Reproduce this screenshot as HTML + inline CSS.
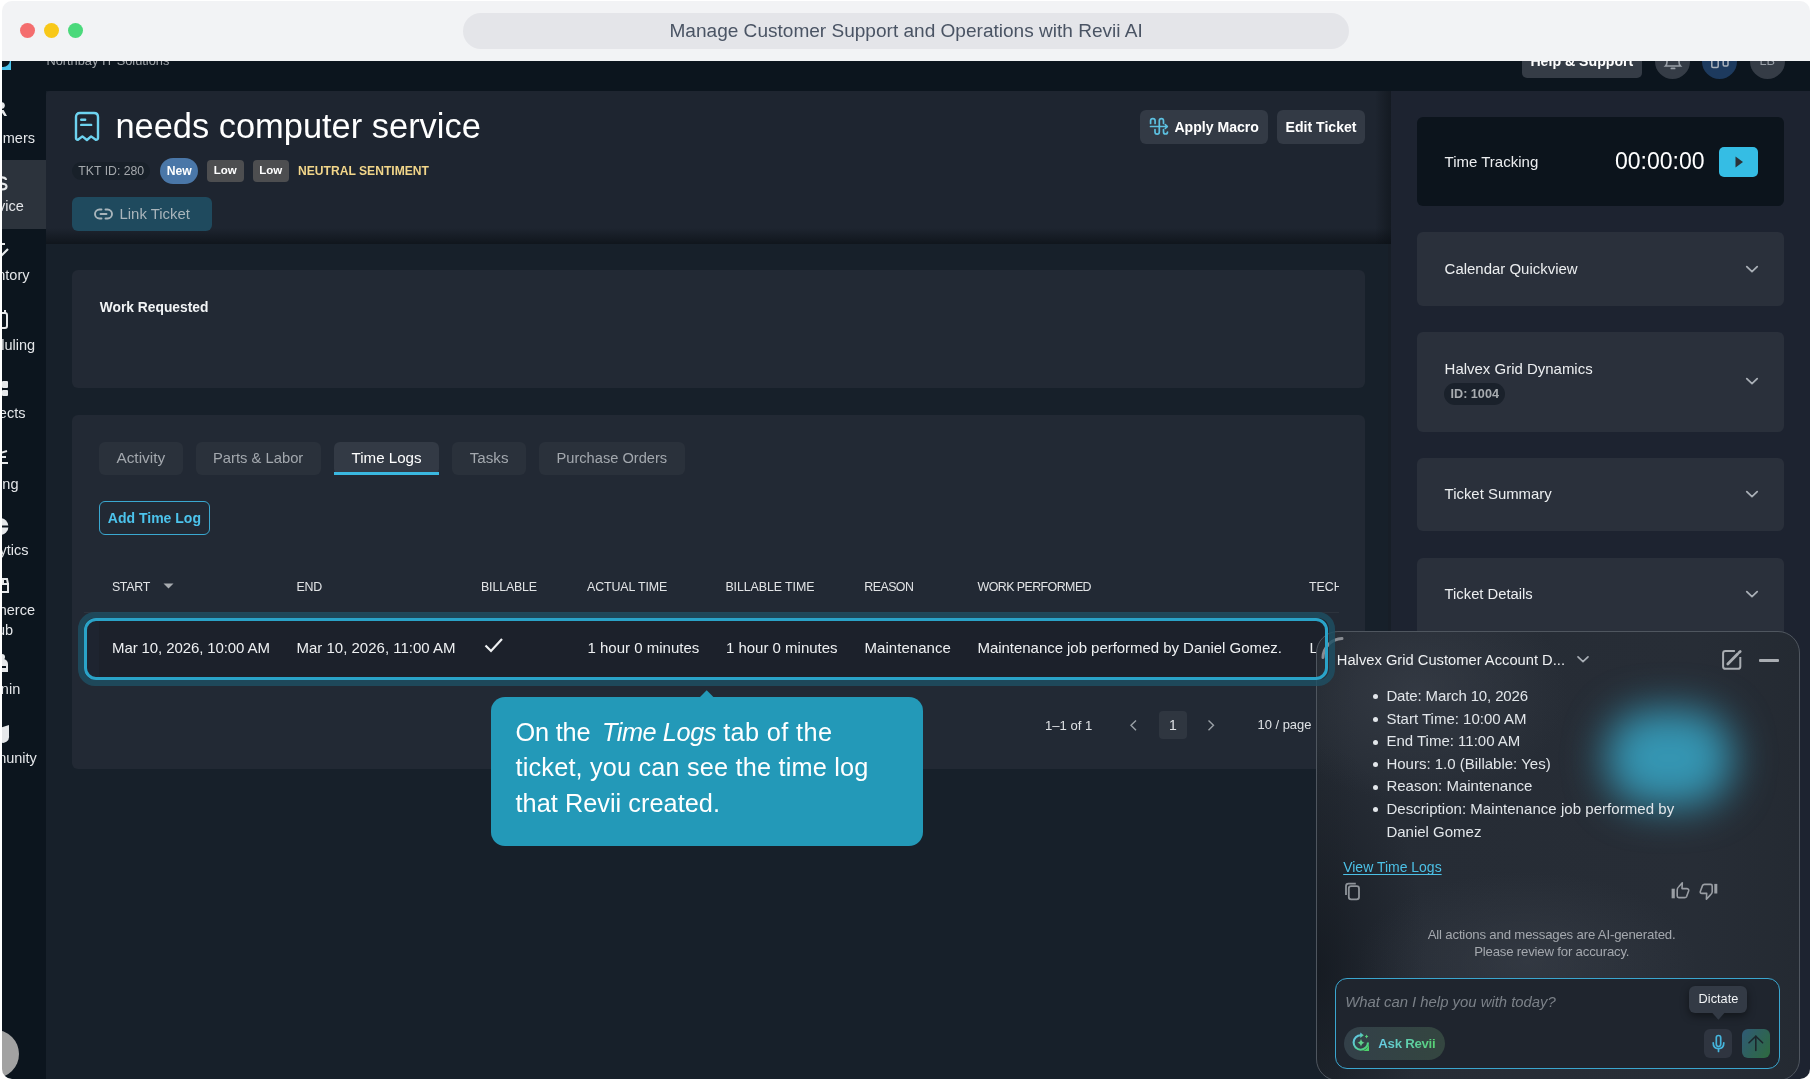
<!DOCTYPE html>
<html><head><meta charset="utf-8">
<style>
*{box-sizing:border-box;margin:0;padding:0}
html,body{width:1812px;height:1080px;overflow:hidden;background:#ffffff;font-family:"Liberation Sans",sans-serif}
#win{position:absolute;left:0;top:0;width:1812px;height:1080px;will-change:transform;clip-path:inset(1px 2px 1px 2px round 10px);background:#1a212b;overflow:hidden}
.t{position:absolute;white-space:nowrap}
.b{position:absolute}
</style></head><body>
<div id="win">
<div class="b" style="left:0px;top:91px;width:1391px;height:989px;background:#17202a;border-radius:0px;"></div>
<div class="b" style="left:1387.5px;top:243px;width:4.0px;height:837px;background:#171e27;border-radius:0px;"></div>
<div class="b" style="left:1391px;top:91px;width:421px;height:989px;background:#1d2330;border-radius:0px;"></div>
<div class="b" style="left:46px;top:91px;width:1345px;height:153px;background:#1e2530;border-radius:0px;border-top-left-radius:4px"></div>
<div class="b" style="left:46px;top:228px;width:1345px;height:16px;background:linear-gradient(rgba(10,15,20,0),rgba(10,15,20,0.7));border-radius:0px;"></div>
<div class="b" style="left:1375px;top:91px;width:16px;height:153px;background:linear-gradient(90deg,rgba(10,15,20,0),rgba(10,15,20,0.5));border-radius:0px;"></div>
<div class="b" style="left:0px;top:61px;width:1812px;height:30px;background:#0c151e;border-radius:0px;"></div>
<div class="b" style="left:0px;top:61px;width:46px;height:1019px;background:#0c151e;border-radius:0px;"></div>
<div class="b" style="left:2px;top:58px;width:8.5px;height:11.5px;background:#4cc3ec;border-radius:0px;"></div>
<div class="b" style="left:-6px;top:52.5px;width:15.5px;height:14.5px;background:#0c151e;border-radius:8px;"></div>
<div class="t" style="left:46.40px;top:54.95px;font-size:12.82px;line-height:12.82px;color:#a2a6ab;">Northbay IT Solutions</div>
<div class="b" style="left:1522px;top:44px;width:120px;height:34px;background:#353c46;border-radius:5px;"></div>
<div class="t" style="left:1530.40px;top:54.12px;font-size:14.15px;line-height:14.15px;color:#ffffff;font-weight:bold;">Help &amp; Support</div>
<div class="b" style="left:1655px;top:44px;width:35px;height:35px;background:#353c46;border-radius:18px;"></div>
<div class="b" style="left:1702px;top:44px;width:35px;height:35px;background:#1d3a5e;border-radius:18px;"></div>
<div class="b" style="left:1750px;top:44px;width:35px;height:35px;background:#353c46;border-radius:18px;"></div>
<svg class="b" style="left:1660px;top:50px;" width="26" height="22" viewBox="0 0 26 22"><path d="M7 2 V12 Q7 14.5 5.5 16 H20.5 Q19 14.5 19 12 V2" fill="none" stroke="#9aa0a8" stroke-width="1.6"/><rect x="10.5" y="17.5" width="5" height="1.8" rx="0.9" fill="#9aa0a8"/></svg>
<svg class="b" style="left:1706px;top:50px;" width="28" height="22" viewBox="0 0 28 22"><rect x="5.8" y="2" width="6.4" height="15.5" rx="1.2" fill="none" stroke="#aab2bc" stroke-width="1.5"/><rect x="17.2" y="6" width="4.8" height="10" rx="1.2" fill="none" stroke="#aab2bc" stroke-width="1.5"/></svg>
<div class="t" style="left:1759.40px;top:54.80px;font-size:12.75px;line-height:12.75px;color:#9aa0a8;">LB</div>
<div class="b" style="left:2px;top:160px;width:44px;height:69px;background:#2c333c;border-radius:0px;"></div>
<div class="t" style="left:2.78px;top:131.13px;font-size:14.50px;line-height:14.50px;color:#e4e6e9;">mers</div>
<div class="t" style="left:-2.09px;top:199.43px;font-size:14.50px;line-height:14.50px;color:#e4e6e9;">vice</div>
<div class="t" style="left:-2.74px;top:267.93px;font-size:14.50px;line-height:14.50px;color:#e4e6e9;">ntory</div>
<div class="t" style="left:1.34px;top:337.73px;font-size:14.50px;line-height:14.50px;color:#e4e6e9;">luling</div>
<div class="t" style="left:-1.19px;top:406.23px;font-size:14.50px;line-height:14.50px;color:#e4e6e9;">ects</div>
<div class="t" style="left:2.37px;top:476.63px;font-size:14.50px;line-height:14.50px;color:#e4e6e9;">ng</div>
<div class="t" style="left:-0.50px;top:543.43px;font-size:14.50px;line-height:14.50px;color:#e4e6e9;">ytics</div>
<div class="t" style="left:-1.27px;top:603.13px;font-size:14.50px;line-height:14.50px;color:#e4e6e9;">herce</div>
<div class="t" style="left:-3.13px;top:622.53px;font-size:14.50px;line-height:14.50px;color:#e4e6e9;">ub</div>
<div class="t" style="left:0.85px;top:682.23px;font-size:14.50px;line-height:14.50px;color:#e4e6e9;">nin</div>
<div class="t" style="left:-1.89px;top:750.73px;font-size:14.50px;line-height:14.50px;color:#e4e6e9;">nunity</div>
<svg class="b" style="left:0px;top:100px;" width="10" height="18" viewBox="0 0 10 18"><circle cx="1.5" cy="5.5" r="3.3" fill="#e6e8ea"/><path d="M0 10 H3.6 L7 16 H4.4 L1.5 12 H0 Z" fill="#e6e8ea"/></svg>
<svg class="b" style="left:0px;top:172px;" width="10" height="20" viewBox="0 0 10 20"><path d="M0 5.5 Q6 5 6 8 M0 11.5 Q6.5 11.5 6.5 14.5 Q6.5 17.5 1 17.5" fill="none" stroke="#e6e8ea" stroke-width="2.2"/></svg>
<svg class="b" style="left:0px;top:240px;" width="10" height="20" viewBox="0 0 10 20"><path d="M0 4 H5 M0 17 L8 9" stroke="#e6e8ea" stroke-width="2.2" fill="none"/></svg>
<svg class="b" style="left:0px;top:310px;" width="10" height="20" viewBox="0 0 10 20"><rect x="-4" y="3" width="11" height="15" rx="2" fill="none" stroke="#e6e8ea" stroke-width="2"/><rect x="4" y="0" width="2" height="4" fill="#e6e8ea"/></svg>
<div class="b" style="left:2px;top:381px;width:6px;height:7px;background:#e6e8ea;border-radius:1px;"></div>
<div class="b" style="left:2px;top:390px;width:6px;height:6px;background:#e6e8ea;border-radius:1px;"></div>
<svg class="b" style="left:0px;top:449px;" width="10" height="16" viewBox="0 0 10 16"><path d="M0 4 L7 2 M2 8 L6 8 M0 14 L8 14" stroke="#e6e8ea" stroke-width="2" fill="none"/></svg>
<svg class="b" style="left:0px;top:517px;" width="10" height="19" viewBox="0 0 10 19"><path d="M0 1 A8 8 0 0 1 0 18 Z" fill="#e6e8ea"/><rect x="0" y="8.5" width="9" height="2" fill="#0c151e"/></svg>
<svg class="b" style="left:0px;top:576px;" width="10" height="18" viewBox="0 0 10 18"><path d="M1 8 L8 8 L8 16 L1 16 Z M3 8 L3 3 L7 3 L8 8" stroke="#e6e8ea" stroke-width="2" fill="none"/></svg>
<svg class="b" style="left:0px;top:652px;" width="10" height="22" viewBox="0 0 10 22"><circle cx="2" cy="5" r="3" fill="#e6e8ea"/><path d="M-2 12 A5 5 0 0 1 8 12 L8 20 L-2 20 Z" fill="#e6e8ea"/><rect x="0" y="14" width="6" height="2" fill="#0c151e"/></svg>
<svg class="b" style="left:0px;top:724px;" width="10" height="20" viewBox="0 0 10 20"><path d="M0 4 L9 1 L9 12 A6 6 0 0 1 0 18 Z" fill="#e6e8ea"/></svg>
<div class="b" style="left:-30px;top:1030px;width:49px;height:48px;background:#a2a2a2;border-radius:26px;"></div>
<div class="b" style="left:0px;top:0px;width:1812px;height:61px;background:#f2f3f5;border-radius:0px;"></div>
<div class="b" style="left:20px;top:23px;width:15px;height:15px;background:#f46d6e;border-radius:8px;"></div>
<div class="b" style="left:44px;top:23px;width:15px;height:15px;background:#f8c819;border-radius:8px;"></div>
<div class="b" style="left:68px;top:23px;width:15px;height:15px;background:#4bd97b;border-radius:8px;"></div>
<div class="b" style="left:463px;top:13px;width:886px;height:36px;background:#e4e5e9;border-radius:18px;"></div>
<div class="t" style="left:669.50px;top:21.07px;font-size:19.06px;line-height:19.06px;color:#4a5464;">Manage Customer Support and Operations with Revii AI</div>
<svg class="b" style="left:74px;top:111px;" width="26" height="31" viewBox="0 0 26 31"><g fill="none" stroke="#6dd3f0" stroke-width="2.4" stroke-linejoin="round" stroke-linecap="round"><path d="M2 27 V6 Q2 2 6 2 H20 Q24 2 24 6 V27 Q24 28.6 21.8 28.8 L17.1 25.4 L12.9 29 L8.4 25.4 L3.9 28.8 Q2 28.6 2 27 Z"/><path d="M7.2 8.8 H11.2 M7.2 13.9 H17.2"/></g></svg>
<div class="t" style="left:115.40px;top:109.25px;font-size:34.44px;line-height:34.44px;color:#ffffff;">needs computer service</div>
<div class="b" style="left:72px;top:162px;width:78px;height:18px;background:#182029;border-radius:9px;"></div>
<div class="t" style="left:78.30px;top:165.00px;font-size:12.28px;line-height:12.28px;color:#a4a8ac;">TKT ID: 280</div>
<div class="b" style="left:160px;top:158px;width:38px;height:26px;background:#4a77a8;border-radius:13px;"></div>
<div class="t" style="left:166.70px;top:164.91px;font-size:12.16px;line-height:12.16px;color:#ffffff;font-weight:bold;">New</div>
<div class="b" style="left:207px;top:160px;width:37px;height:22px;background:#4d4e50;border-radius:4px;"></div>
<div class="t" style="left:213.80px;top:165.46px;font-size:11.50px;line-height:11.50px;color:#ffffff;font-weight:bold;">Low</div>
<div class="b" style="left:253px;top:160px;width:36px;height:22px;background:#4d4e50;border-radius:4px;"></div>
<div class="t" style="left:259.30px;top:165.46px;font-size:11.50px;line-height:11.50px;color:#ffffff;font-weight:bold;">Low</div>
<div class="t" style="left:298.00px;top:165.05px;font-size:12.11px;line-height:12.11px;color:#f2d68a;font-weight:bold;">NEUTRAL SENTIMENT</div>
<div class="b" style="left:72px;top:197px;width:140px;height:34px;background:#1f4a5e;border-radius:6px;"></div>
<svg class="b" style="left:94px;top:208px;" width="20" height="12" viewBox="0 0 20 12"><g fill="none" stroke="#a9b5bb" stroke-width="1.9" stroke-linecap="round"><path d="M7.5 1.5 H5.5 A4.5 4.5 0 0 0 5.5 10.5 H7.5"/><path d="M11.5 1.5 H13.5 A4.5 4.5 0 0 1 13.5 10.5 H11.5"/><path d="M6.5 6 H12.5"/></g></svg>
<div class="t" style="left:119.50px;top:206.57px;font-size:14.92px;line-height:14.92px;color:#a9b5bb;">Link Ticket</div>
<div class="b" style="left:1140px;top:110px;width:128px;height:34px;background:#333a45;border-radius:6px;"></div>
<svg class="b" style="left:1144px;top:112px;" width="30" height="30" viewBox="0 0 30 30"><g fill="none" stroke="#5cc0e0" stroke-width="1.7" stroke-linecap="round" stroke-linejoin="round"><path d="M6.6 11.5 V8.8 A2.25 2.25 0 0 1 11.1 8.8 V11.5"/><path d="M11 17.5 V20 A2.15 2.15 0 0 0 15.3 20 V8.8 A2.1 2.1 0 0 1 19.5 8.8 V11.5"/><path d="M19.5 17.5 V20 A2 2 0 0 0 23.5 20"/><path d="M6.5 14.5 H23"/><path d="M21.3 12.6 L23.3 14.5 L21.3 16.4"/></g></svg>
<div class="t" style="left:1174.40px;top:119.77px;font-size:14.10px;line-height:14.10px;color:#ffffff;font-weight:bold;">Apply Macro</div>
<div class="b" style="left:1277px;top:110px;width:88px;height:34px;background:#333a45;border-radius:6px;"></div>
<div class="t" style="left:1285.60px;top:119.77px;font-size:14.09px;line-height:14.09px;color:#ffffff;font-weight:bold;">Edit Ticket</div>
<div class="b" style="left:1417px;top:117px;width:367px;height:89px;background:#0c141c;border-radius:6px;"></div>
<div class="t" style="left:1444.60px;top:154.29px;font-size:15.01px;line-height:15.01px;color:#eceef0;">Time Tracking</div>
<div class="t" style="left:1615.00px;top:150.32px;font-size:23.02px;line-height:23.02px;color:#ffffff;">00:00:00</div>
<div class="b" style="left:1719px;top:147px;width:39px;height:30px;background:#35bde4;border-radius:5px;"></div>
<svg class="b" style="left:1733px;top:154px;" width="12" height="16" viewBox="0 0 12 16"><path d="M2.5 2.5 L10 8 L2.5 13.5 Z" fill="#2b3238"/></svg>
<div class="b" style="left:1417px;top:232px;width:367px;height:74px;background:#2a303b;border-radius:6px;"></div>
<div class="t" style="left:1444.60px;top:261.64px;font-size:14.96px;line-height:14.96px;color:#eceef0;">Calendar Quickview</div>
<svg class="b" style="left:1744.5px;top:264px;" width="14" height="10" viewBox="0 0 14 10"><path d="M1.8 2.6 L7 7.6 L12.2 2.6" fill="none" stroke="#a9afb6" stroke-width="1.8" stroke-linecap="round" stroke-linejoin="round"/></svg>
<div class="b" style="left:1417px;top:332px;width:367px;height:100px;background:#2a303b;border-radius:6px;"></div>
<div class="t" style="left:1444.60px;top:361.22px;font-size:14.98px;line-height:14.98px;color:#eceef0;">Halvex Grid Dynamics</div>
<div class="b" style="left:1444px;top:383px;width:61px;height:22px;background:#1a212b;border-radius:11px;"></div>
<div class="t" style="left:1450.50px;top:387.50px;font-size:12.64px;line-height:12.64px;color:#a8acb0;font-weight:bold;">ID: 1004</div>
<svg class="b" style="left:1744.5px;top:376px;" width="14" height="10" viewBox="0 0 14 10"><path d="M1.8 2.6 L7 7.6 L12.2 2.6" fill="none" stroke="#a9afb6" stroke-width="1.8" stroke-linecap="round" stroke-linejoin="round"/></svg>
<div class="b" style="left:1417px;top:458px;width:367px;height:73px;background:#2a303b;border-radius:6px;"></div>
<div class="t" style="left:1444.60px;top:487.17px;font-size:14.92px;line-height:14.92px;color:#eceef0;">Ticket Summary</div>
<svg class="b" style="left:1744.5px;top:489px;" width="14" height="10" viewBox="0 0 14 10"><path d="M1.8 2.6 L7 7.6 L12.2 2.6" fill="none" stroke="#a9afb6" stroke-width="1.8" stroke-linecap="round" stroke-linejoin="round"/></svg>
<div class="b" style="left:1417px;top:558px;width:367px;height:102px;background:#2a303b;border-radius:6px;"></div>
<div class="t" style="left:1444.60px;top:587.28px;font-size:14.79px;line-height:14.79px;color:#eceef0;">Ticket Details</div>
<svg class="b" style="left:1744.5px;top:589px;" width="14" height="10" viewBox="0 0 14 10"><path d="M1.8 2.6 L7 7.6 L12.2 2.6" fill="none" stroke="#a9afb6" stroke-width="1.8" stroke-linecap="round" stroke-linejoin="round"/></svg>
<div class="b" style="left:72px;top:270px;width:1293px;height:118px;background:#222934;border-radius:6px;"></div>
<div class="t" style="left:99.70px;top:300.50px;font-size:13.82px;line-height:13.82px;color:#f2f4f6;font-weight:bold;">Work Requested</div>
<div class="b" style="left:72px;top:415px;width:1293px;height:354px;background:#222934;border-radius:6px;"></div>
<div class="b" style="left:99px;top:441.5px;width:84px;height:33.0px;background:#2a313b;border-radius:6px;"></div>
<div class="t" style="left:116.40px;top:450.16px;font-size:15.41px;line-height:15.41px;color:#a3a8ae;">Activity</div>
<div class="b" style="left:196px;top:441.5px;width:125px;height:33.0px;background:#2a313b;border-radius:6px;"></div>
<div class="t" style="left:213.00px;top:450.68px;font-size:14.78px;line-height:14.78px;color:#a3a8ae;">Parts &amp; Labor</div>
<div class="b" style="left:334px;top:441.5px;width:105px;height:33.0px;background:#333a45;border-radius:6px;"></div>
<div class="t" style="left:351.60px;top:450.41px;font-size:15.11px;line-height:15.11px;color:#ffffff;">Time Logs</div>
<div class="b" style="left:452px;top:441.5px;width:74px;height:33.0px;background:#2a313b;border-radius:6px;"></div>
<div class="t" style="left:469.80px;top:450.38px;font-size:15.14px;line-height:15.14px;color:#a3a8ae;">Tasks</div>
<div class="b" style="left:539px;top:441.5px;width:146px;height:33.0px;background:#2a313b;border-radius:6px;"></div>
<div class="t" style="left:556.50px;top:450.80px;font-size:14.65px;line-height:14.65px;color:#a3a8ae;">Purchase Orders</div>
<div class="b" style="left:334px;top:471.5px;width:105px;height:3.0px;background:#3ab8e0;border-radius:0px;"></div>
<div class="b" style="left:99px;top:501px;width:111px;height:34px;background:transparent;border-radius:6px;border:1.6px solid #3aa8d0"></div>
<div class="t" style="left:107.80px;top:511.13px;font-size:14.02px;line-height:14.02px;color:#4cc3ec;font-weight:bold;">Add Time Log</div>
<div class="t" style="left:111.90px;top:580.50px;font-size:12.40px;line-height:12.40px;color:#e2e4e6;letter-spacing:-0.281px;">START</div>
<svg class="b" style="left:162px;top:582px;" width="13" height="8" viewBox="0 0 13 8"><path d="M1.5 1.5 L11.5 1.5 L6.5 6.5 Z" fill="#a8acb0"/></svg>
<div class="t" style="left:296.50px;top:580.50px;font-size:12.40px;line-height:12.40px;color:#e2e4e6;letter-spacing:-0.227px;">END</div>
<div class="t" style="left:481.00px;top:580.50px;font-size:12.40px;line-height:12.40px;color:#e2e4e6;letter-spacing:-0.152px;">BILLABLE</div>
<div class="t" style="left:587.00px;top:580.50px;font-size:12.40px;line-height:12.40px;color:#e2e4e6;letter-spacing:-0.091px;">ACTUAL TIME</div>
<div class="t" style="left:725.40px;top:580.50px;font-size:12.40px;line-height:12.40px;color:#e2e4e6;letter-spacing:-0.082px;">BILLABLE TIME</div>
<div class="t" style="left:864.30px;top:580.50px;font-size:12.40px;line-height:12.40px;color:#e2e4e6;letter-spacing:-0.545px;">REASON</div>
<div class="t" style="left:977.50px;top:580.50px;font-size:12.40px;line-height:12.40px;color:#e2e4e6;letter-spacing:-0.546px;">WORK PERFORMED</div>
<div class="b" style="left:1300px;top:570px;width:39px;height:30px;overflow:hidden">
<div class="t" style="left:9.00px;top:10.50px;font-size:12.40px;line-height:12.40px;color:#e2e4e6;">TECH</div>
</div>
<div class="b" style="left:84px;top:612px;width:1255px;height:1px;background:#2c333d;border-radius:0px;"></div>
<div class="b" style="left:86px;top:620px;width:1241px;height:58px;background:#1e2430;border-radius:10px;"></div>
<div class="b" style="left:99.4px;top:620px;width:1227.6px;height:58px;background:#1c212b;border-radius:0px;"></div>
<div class="t" style="left:112.00px;top:640.30px;font-size:15.00px;line-height:15.00px;color:#eef0f2;letter-spacing:-0.105px;">Mar 10, 2026, 10:00 AM</div>
<div class="t" style="left:296.50px;top:640.30px;font-size:15.00px;line-height:15.00px;color:#eef0f2;">Mar 10, 2026, 11:00 AM</div>
<svg class="b" style="left:483px;top:636px;" width="22" height="18" viewBox="0 0 22 18"><path d="M2.5 9.5 L8 15 L19 3" fill="none" stroke="#eef0f2" stroke-width="2.2"/></svg>
<div class="t" style="left:587.50px;top:640.30px;font-size:15.00px;line-height:15.00px;color:#eef0f2;">1 hour 0 minutes</div>
<div class="t" style="left:725.90px;top:640.30px;font-size:15.00px;line-height:15.00px;color:#eef0f2;">1 hour 0 minutes</div>
<div class="t" style="left:864.50px;top:640.30px;font-size:15.00px;line-height:15.00px;color:#eef0f2;letter-spacing:0.046px;">Maintenance</div>
<div class="t" style="left:977.50px;top:640.30px;font-size:15.00px;line-height:15.00px;color:#eef0f2;letter-spacing:-0.040px;">Maintenance job performed by Daniel Gomez.</div>
<div class="t" style="left:1309.50px;top:640.30px;font-size:15.00px;line-height:15.00px;color:#eef0f2;">L</div>
<div class="t" style="left:1045.00px;top:718.92px;font-size:13.09px;line-height:13.09px;color:#dfe2e5;">1–1 of 1</div>
<svg class="b" style="left:1128px;top:718px;" width="10" height="14" viewBox="0 0 10 14"><path d="M8 2.4 L3 7.3 L8 12.2" fill="none" stroke="#9aa0a6" stroke-width="1.4"/></svg>
<div class="b" style="left:1158.6px;top:711.2px;width:28.0px;height:27.399999999999977px;background:#2f3640;border-radius:4px;"></div>
<div class="t" style="left:1169.00px;top:718.15px;font-size:14.00px;line-height:14.00px;color:#dfe2e5;">1</div>
<svg class="b" style="left:1206px;top:718px;" width="10" height="14" viewBox="0 0 10 14"><path d="M2.5 2.4 L7.5 7.3 L2.5 12.2" fill="none" stroke="#9aa0a6" stroke-width="1.4"/></svg>
<div class="t" style="left:1257.50px;top:719.04px;font-size:12.95px;line-height:12.95px;color:#dfe2e5;">10 / page</div>
<div class="b" style="left:1315.5px;top:631px;width:484px;height:450px;border-radius:22px;border:1px solid #4f565f;background:radial-gradient(ellipse 150px 110px at 100px 60px, rgba(62,68,78,0.55), rgba(62,68,78,0) 100%),radial-gradient(ellipse 170px 90px at 210px 330px, rgba(62,68,78,0.5), rgba(62,68,78,0) 100%),radial-gradient(ellipse 110px 230px at 0px 340px, rgba(18,23,30,0.75), rgba(18,23,30,0) 100%),linear-gradient(90deg,#232931 0px,#262c35 40px,#272d36 380px,#242a32 484px);"></div>
<div class="b" style="left:1606px;top:710px;width:126px;height:96px;border-radius:44px;background:#3596b3;filter:blur(20px)"></div>
<svg class="b" style="left:1318px;top:634px;" width="30" height="30" viewBox="0 0 30 30"><path d="M5 23.5 A19.5 19.5 0 0 1 24 4.5" fill="none" stroke="#9a9ea3" stroke-width="3" stroke-linecap="round" opacity="0.85"/></svg>
<div class="t" style="left:1336.80px;top:652.53px;font-size:14.73px;line-height:14.73px;color:#eef0f2;">Halvex Grid Customer Account D...</div>
<svg class="b" style="left:1576px;top:654px;" width="14" height="10" viewBox="0 0 14 10"><path d="M2 2.8 L7 7.6 L12 2.8" fill="none" stroke="#a9afb6" stroke-width="1.7" stroke-linecap="round" stroke-linejoin="round"/></svg>
<svg class="b" style="left:1721px;top:649px;" width="22" height="22" viewBox="0 0 22 22"><g fill="none" stroke="#a9adb2" stroke-width="2"><path d="M13.9 1.9 H4.5 Q2.1 1.9 2.1 4.3 V17.4 Q2.1 19.8 4.5 19.8 H16.9 Q19.3 19.8 19.3 17.4 V7.9"/><path d="M6.8 14.9 L16.6 5.1" stroke-width="2.8" stroke-linecap="round"/><path d="M18.1 3.6 L19.2 2.5" stroke-width="2.8" stroke-linecap="round"/></g></svg>
<div class="b" style="left:1759px;top:659px;width:19.5px;height:3px;background:#a9adb2;border-radius:1px;"></div>
<div class="b" style="left:1373.4px;top:694.3000000000001px;width:5.0px;height:5.0px;background:#e2e6ea;border-radius:3px;"></div>
<div class="t" style="left:1386.40px;top:687.90px;font-size:15.00px;line-height:15.00px;color:#e2e6ea;letter-spacing:-0.133px;">Date: March 10, 2026</div>
<div class="b" style="left:1373.4px;top:716.9000000000001px;width:5.0px;height:5.0px;background:#e2e6ea;border-radius:3px;"></div>
<div class="t" style="left:1386.40px;top:710.50px;font-size:15.00px;line-height:15.00px;color:#e2e6ea;">Start Time: 10:00 AM</div>
<div class="b" style="left:1373.4px;top:739.5000000000001px;width:5.0px;height:5.0px;background:#e2e6ea;border-radius:3px;"></div>
<div class="t" style="left:1386.40px;top:733.10px;font-size:15.00px;line-height:15.00px;color:#e2e6ea;">End Time: 11:00 AM</div>
<div class="b" style="left:1373.4px;top:762.1000000000001px;width:5.0px;height:5.0px;background:#e2e6ea;border-radius:3px;"></div>
<div class="t" style="left:1386.40px;top:755.70px;font-size:15.00px;line-height:15.00px;color:#e2e6ea;">Hours: 1.0 (Billable: Yes)</div>
<div class="b" style="left:1373.4px;top:784.7px;width:5.0px;height:5.0px;background:#e2e6ea;border-radius:3px;"></div>
<div class="t" style="left:1386.40px;top:778.30px;font-size:15.00px;line-height:15.00px;color:#e2e6ea;">Reason: Maintenance</div>
<div class="b" style="left:1373.4px;top:807.3000000000001px;width:5.0px;height:5.0px;background:#e2e6ea;border-radius:3px;"></div>
<div class="t" style="left:1386.40px;top:800.90px;font-size:15.00px;line-height:15.00px;color:#e2e6ea;letter-spacing:0.044px;">Description: Maintenance job performed by</div>
<div class="t" style="left:1386.40px;top:823.50px;font-size:15.00px;line-height:15.00px;color:#e2e6ea;">Daniel Gomez</div>
<div class="t" style="left:1343.20px;top:860.46px;font-size:13.99px;line-height:13.99px;color:#4cc0e6;text-decoration:underline;text-underline-offset:2px;">View Time Logs</div>
<svg class="b" style="left:1338px;top:876px;" width="30" height="30" viewBox="0 0 30 30"><g fill="none" stroke="#8f949a" stroke-width="1.8"><path d="M17.8 7.7 H10.5 Q8 7.7 8 10.2 V18.9"/><rect x="10.8" y="10.1" width="10.2" height="13.2" rx="2.3"/></g></svg>
<svg class="b" style="left:1664px;top:874px;" width="60" height="32" viewBox="0 0 60 32"><g fill="none" stroke="#9a9ea4" stroke-width="1.6" stroke-linejoin="round"><path d="M13.2 16 Q13.2 14 15 12.5 L18.3 8.8 L18 14.6 H23 Q25.2 15 24.6 17 L22.6 22.6 Q22.1 23.6 20.6 23.6 H14.8 Q13.2 23.6 13.2 22 Z"/><path d="M48.2 12 Q48.2 10.4 46.6 10.4 H40.5 Q39 10.4 38.5 11.6 L36.3 17.5 Q35.9 19.4 38 19.4 H42.7 L42.4 25.3 L46 21.4 Q48.2 19.4 48.2 18 Z"/></g><rect x="7.6" y="14.7" width="3.2" height="9.6" fill="#9a9ea4"/><rect x="50.3" y="9.9" width="3" height="9.6" fill="#9a9ea4"/></svg>
<div class="t" style="left:1427.70px;top:928.03px;font-size:13.20px;line-height:13.20px;color:#a4a8ae;letter-spacing:-0.175px;">All actions and messages are AI-generated.</div>
<div class="t" style="left:1474.20px;top:945.03px;font-size:13.20px;line-height:13.20px;color:#a4a8ae;letter-spacing:-0.190px;">Please review for accuracy.</div>
<div class="b" style="left:1334.6px;top:977.7px;width:445.20000000000005px;height:91.09999999999991px;background:#1f252e;border-radius:12px;border:1.6px solid #3aa6cf"></div>
<div class="t" style="left:1345.20px;top:994.82px;font-size:14.86px;line-height:14.86px;color:#7b8188;font-style:italic;">What can I help you with today?</div>
<div class="b" style="left:1344.3px;top:1027.2px;width:100.40000000000009px;height:32.399999999999864px;background:linear-gradient(90deg,#334049,#344640);border-radius:17px;"></div>
<svg class="b" style="left:1350px;top:1031px;" width="22" height="22" viewBox="0 0 22 22"><defs><linearGradient id="ga" x1="0" y1="0" x2="1" y2="1"><stop offset="0" stop-color="#62c6ee"/><stop offset="1" stop-color="#4cd46a"/></linearGradient></defs><path d="M18 11.5 A7.2 7.2 0 1 1 11 4.3" fill="none" stroke="url(#ga)" stroke-width="2.1"/><path d="M10.3 1.6 L13.8 4.3 L10.3 7 Z" fill="url(#ga)"/><path d="M19 12 L19 20 L11 20 A8 8 0 0 0 19 12 Z" fill="#4cd46a"/><path d="M11 7.8 Q11.6 11.2 14.6 11.8 Q11.6 12.4 11 15.8 Q10.4 12.4 7.4 11.8 Q10.4 11.2 11 7.8 Z" fill="#5ed08a"/><path d="M16.6 3.5 Q16.9 5.2 18.4 5.5 Q16.9 5.8 16.6 7.5 Q16.3 5.8 14.8 5.5 Q16.3 5.2 16.6 3.5 Z" fill="#58d27a"/></svg>
<div class="t" style="left:1378.3px;top:1036.8px;font-size:13.2px;line-height:13.2px;font-weight:bold;background:linear-gradient(90deg,#68cdea,#58d274);-webkit-background-clip:text;background-clip:text;color:transparent;letter-spacing:-0.25px">Ask Revii</div>
<div class="b" style="left:1689.3px;top:986.2px;width:57.5px;height:27.2px;background:#333a45;border-radius:6px;box-shadow:0 3px 8px rgba(0,0,0,0.45)"></div>
<svg class="b" style="left:1710px;top:1012px;" width="17" height="9" viewBox="0 0 17 9"><path d="M1.5 0 L8.4 7.8 L15.3 0 Z" fill="#333a45"/></svg>
<div class="t" style="left:1698.60px;top:992.90px;font-size:12.76px;line-height:12.76px;color:#f2f4f6;">Dictate</div>
<div class="b" style="left:1704px;top:1029px;width:28.40000000000009px;height:28.799999999999955px;background:#2f3540;border-radius:6px;"></div>
<svg class="b" style="left:1708px;top:1033px;" width="20" height="22" viewBox="0 0 20 22"><g fill="none" stroke="#45b5dc" stroke-width="1.7" stroke-linecap="round"><rect x="8.3" y="2.5" width="4.4" height="11" rx="2.2"/><path d="M5.2 9.8 Q5.2 15.6 10.5 15.6 Q15.8 15.6 15.8 9.8"/><path d="M10.5 15.6 V18.5"/></g></svg>
<div class="b" style="left:1741.8px;top:1029px;width:28.299999999999955px;height:28.799999999999955px;background:linear-gradient(120deg,#2f5a76,#2e6a3e);border-radius:6px;"></div>
<svg class="b" style="left:1746px;top:1033px;" width="20" height="22" viewBox="0 0 20 22"><g fill="none" stroke="#1c262c" stroke-width="1.6" stroke-linecap="round" stroke-linejoin="round"><path d="M9.8 3.2 V17.5"/><path d="M3 9.8 L9.8 3.2 L16.6 9.8"/></g></svg>
<div class="b" style="left:78.1px;top:611.9px;width:1256.9px;height:73.7px;border-radius:17px;border:6px solid rgba(30,80,100,0.8)"></div>
<div class="b" style="left:83.9px;top:617.8px;width:1244.6px;height:62.3px;border-radius:12px;border:3.7px solid #2aa3c8"></div>
<div class="b" style="left:491.4px;top:697.3px;width:431.6px;height:149.0px;background:#2399b8;border-radius:14px;"></div>
<svg class="b" style="left:698px;top:689px;" width="18" height="9" viewBox="0 0 18 9"><path d="M1.5 8.5 L8.7 1.2 L15.9 8.5 Z" fill="#2399b8"/></svg>
<div class="t" style="left:515.50px;top:719.58px;font-size:25.30px;line-height:25.30px;color:#ffffff;letter-spacing:-0.175px;">On the</div>
<div class="t" style="left:601.90px;top:719.58px;font-size:25.30px;line-height:25.30px;color:#ffffff;font-style:italic;letter-spacing:-0.410px;">Time Logs</div>
<div class="t" style="left:723.20px;top:719.58px;font-size:25.30px;line-height:25.30px;color:#ffffff;letter-spacing:0.370px;">tab of the</div>
<div class="t" style="left:515.50px;top:755.38px;font-size:25.30px;line-height:25.30px;color:#ffffff;letter-spacing:0.176px;">ticket, you can see the time log</div>
<div class="t" style="left:515.50px;top:791.18px;font-size:25.30px;line-height:25.30px;color:#ffffff;letter-spacing:0.031px;">that Revii created.</div>
</div>
</body></html>
